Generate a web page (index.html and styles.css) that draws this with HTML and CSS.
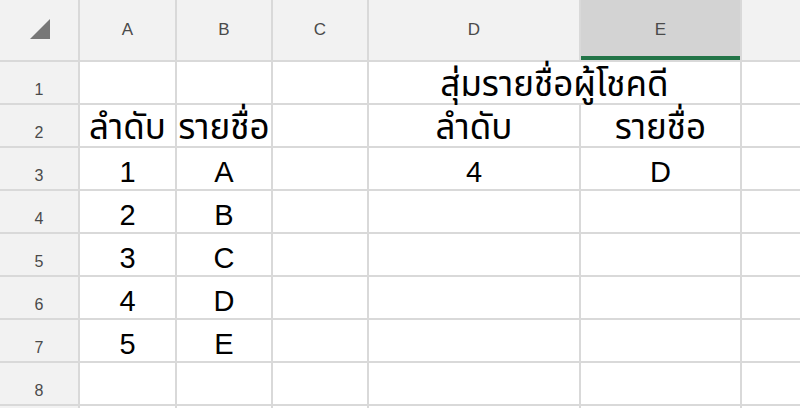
FILE: index.html
```html
<!DOCTYPE html>
<html lang="th">
<head>
<meta charset="utf-8">
<title>Sheet</title>
<link rel="stylesheet" href="styles.css">
</head>
<body>
<div class="sheet">
  <div class="hd corner"><span class="tri"></span></div>
  <div class="hd col">A</div>
  <div class="hd col">B</div>
  <div class="hd col">C</div>
  <div class="hd col">D</div>
  <div class="hd col sel">E</div>
  <div class="hd col"></div>

  <div class="hd row">1</div>
  <div class="c"></div><div class="c"></div><div class="c"></div>
  <div class="c th span2">สุ่มรายชื่อผู้โชคดี</div>
  <div class="c"></div>

  <div class="hd row">2</div>
  <div class="c th">ลำดับ</div><div class="c th">รายชื่อ</div><div class="c"></div>
  <div class="c th">ลำดับ</div><div class="c th">รายชื่อ</div><div class="c"></div>

  <div class="hd row">3</div>
  <div class="c">1</div><div class="c">A</div><div class="c"></div>
  <div class="c">4</div><div class="c">D</div><div class="c"></div>

  <div class="hd row">4</div>
  <div class="c">2</div><div class="c">B</div><div class="c"></div>
  <div class="c"></div><div class="c"></div><div class="c"></div>

  <div class="hd row">5</div>
  <div class="c">3</div><div class="c">C</div><div class="c"></div>
  <div class="c"></div><div class="c"></div><div class="c"></div>

  <div class="hd row">6</div>
  <div class="c">4</div><div class="c">D</div><div class="c"></div>
  <div class="c"></div><div class="c"></div><div class="c"></div>

  <div class="hd row">7</div>
  <div class="c">5</div><div class="c">E</div><div class="c"></div>
  <div class="c"></div><div class="c"></div><div class="c"></div>

  <div class="hd row">8</div>
  <div class="c"></div><div class="c"></div><div class="c"></div>
  <div class="c"></div><div class="c"></div><div class="c"></div>

  <div class="hd row"></div>
  <div class="c"></div><div class="c"></div><div class="c"></div>
  <div class="c"></div><div class="c"></div><div class="c"></div>
</div>
</body>
</html>
```

FILE: styles.css
```css
html, body {
  margin: 0;
  padding: 0;
  background: #ffffff;
  overflow: hidden;
}

.sheet {
  width: 800px;
  height: 408px;
  overflow: hidden;
  display: grid;
  grid-template-columns: 78px 95px 94px 94px 210px 159px 1fr;
  grid-template-rows: 60px repeat(9, 41px);
  gap: 2px;
  background: #d9d9d9;
}

.hd {
  background: #f2f2f2;
  color: #4a4a4a;
  font-family: "Liberation Sans", Arial, sans-serif;
  font-size: 16px;
  display: flex;
  justify-content: center;
}

.col {
  align-items: center;
  font-size: 17px;
}

.col.sel {
  background: #d3d3d3;
  box-shadow: inset 0 -4px 0 #227447;
}

.row {
  align-items: flex-end;
  padding-bottom: 5px;
  line-height: 1;
}

.corner {
  position: relative;
}

.tri {
  position: absolute;
  left: 30px;
  top: 19px;
  width: 0;
  height: 0;
  border-style: solid;
  border-width: 0 0 20px 20px;
  border-color: transparent transparent #777777 transparent;
}

.c {
  background: #ffffff;
  color: #000000;
  font-family: "Liberation Sans", "Noto Sans Thai", "Noto Sans", sans-serif;
  font-size: 29px;
  display: flex;
  justify-content: center;
  align-items: flex-end;
  white-space: nowrap;
  line-height: 1.15;
}

.th {
  font-size: 35px;
  line-height: 1.1;
}

.span2 {
  grid-column: span 2;
}
```
